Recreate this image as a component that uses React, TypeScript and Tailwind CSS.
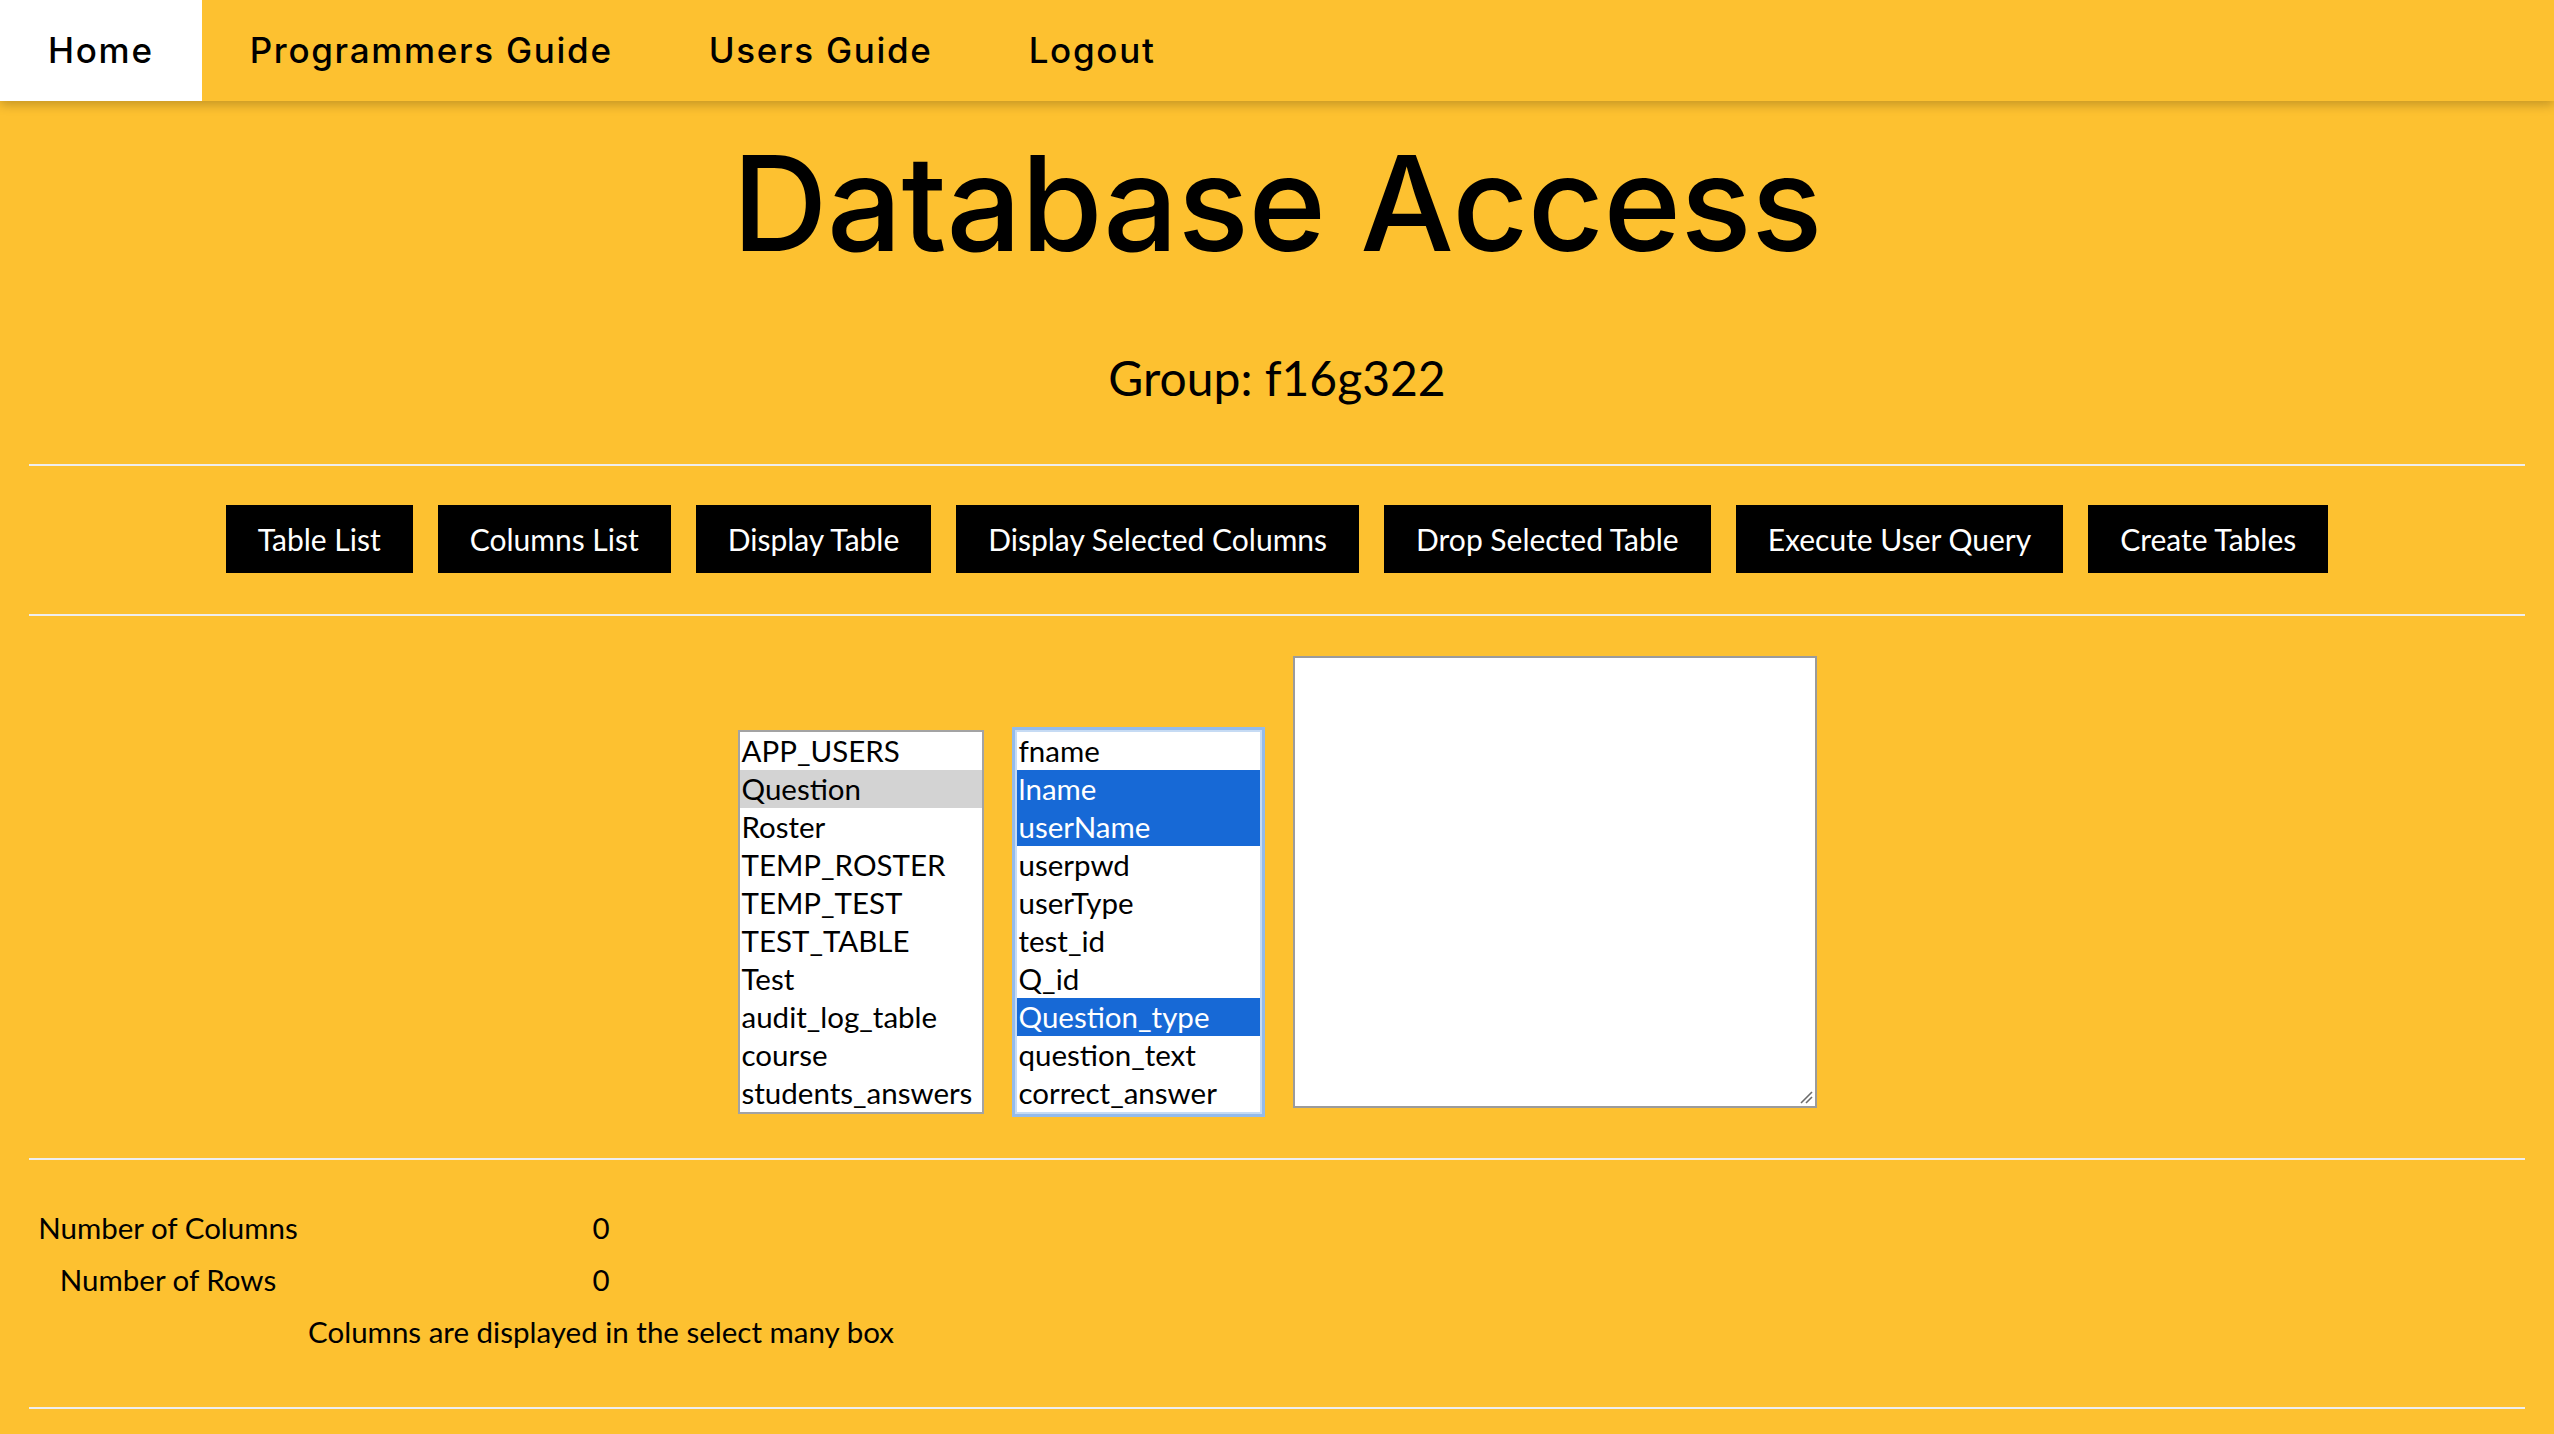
import React from "react";

const tables = [
  "APP_USERS",
  "Question",
  "Roster",
  "TEMP_ROSTER",
  "TEMP_TEST",
  "TEST_TABLE",
  "Test",
  "audit_log_table",
  "course",
  "students_answers",
];

const columns = [
  "fname",
  "lname",
  "userName",
  "userpwd",
  "userType",
  "test_id",
  "Q_id",
  "Question_type",
  "question_text",
  "correct_answer",
];
const selectedCols = new Set(["lname", "userName", "Question_type"]);

const buttons = [
  "Table List",
  "Columns List",
  "Display Table",
  "Display Selected Columns",
  "Drop Selected Table",
  "Execute User Query",
  "Create Tables",
];

const lato = { fontFamily: "Lato, 'Open Sans', sans-serif" };
const head = { fontFamily: "Inter, 'Noto Sans', sans-serif" };

function Hr({ className }: { className: string }) {
  return <div className={`mx-[29px] h-[2px] bg-[#eeeeee] ${className}`} />;
}

export default function App() {
  return (
    <div className="min-h-[1434px] w-full bg-[#fdc130] text-black" style={lato}>
      <nav
        className="relative z-10 flex h-[101px] items-stretch bg-[#fdc130] shadow-[0_4px_10px_rgba(0,0,0,0.22)]"
        style={head}
      >
        {["Home", "Programmers Guide", "Users Guide", "Logout"].map((t, i) => (
          <a
            key={t}
            className={`flex items-center px-[48px] text-[35px] font-medium tracking-[1.7px] ${
              i === 0 ? "bg-white" : ""
            }`}
          >
            {t}
          </a>
        ))}
      </nav>

      <h1
        className="mt-[36px] h-[132px] text-center text-[132px] font-medium leading-none tracking-[-0.5px]"
        style={head}
      >
        Database Access
      </h1>

      <div className="mt-[85px] h-[48px] text-center text-[48px] leading-none">
        Group: f16g322
      </div>

      <Hr className="mt-[62px]" />

      <div className="mt-[39px] flex justify-center gap-[25px]">
        {buttons.map((b) => (
          <button
            key={b}
            className="flex h-[68px] items-center bg-black px-[32px] text-[30px] text-white"
          >
            {b}
          </button>
        ))}
      </div>

      <Hr className="mt-[41px]" />

      <div className="mt-[40px] flex items-end justify-center">
        <div className="w-[246px] border-2 border-[#a3a3a3] bg-white text-[29.5px]">
          {tables.map((t) => (
            <div
              key={t}
              className={`h-[38px] overflow-hidden whitespace-nowrap pl-[2px] leading-[38px] ${
                t === "Question" ? "bg-[#d3d3d3]" : ""
              }`}
            >
              {t}
            </div>
          ))}
        </div>

        <div className="ml-[31px] w-[247px] border-2 border-[#c6dbf4] bg-white text-[29.5px] shadow-[0_0_0_3px_#94bbeb]">
          {columns.map((c) => (
            <div
              key={c}
              className={`h-[38px] overflow-hidden whitespace-nowrap pl-[2px] leading-[38px] ${
                selectedCols.has(c) ? "bg-[#1769d6] text-white" : ""
              }`}
            >
              {c}
            </div>
          ))}
        </div>

        <div className="relative mb-[6px] ml-[31px] h-[452px] w-[524px] border-2 border-[#9b9b9b] bg-white">
          <svg
            className="absolute bottom-[2px] right-[2px]"
            width="14"
            height="14"
            viewBox="0 0 14 14"
          >
            <line x1="2" y1="13" x2="13" y2="2" stroke="#6b6b6b" strokeWidth="1.6" />
            <line x1="7" y1="13" x2="13" y2="7" stroke="#6b6b6b" strokeWidth="1.6" />
          </svg>
        </div>
      </div>

      <Hr className="mt-[44px]" />

      <div className="mt-[42px] ml-[33px] grid grid-cols-[270px_596px] text-[29.5px]">
        <div className="flex h-[52px] items-center justify-center whitespace-nowrap">
          Number of Columns
        </div>
        <div className="flex h-[52px] items-center justify-center">0</div>
        <div className="flex h-[52px] items-center justify-center whitespace-nowrap">
          Number of Rows
        </div>
        <div className="flex h-[52px] items-center justify-center">0</div>
        <div className="h-[52px]" />
        <div className="flex h-[52px] items-center justify-center whitespace-nowrap">
          Columns are displayed in the select many box
        </div>
      </div>

      <Hr className="mt-[49px]" />
    </div>
  );
}
